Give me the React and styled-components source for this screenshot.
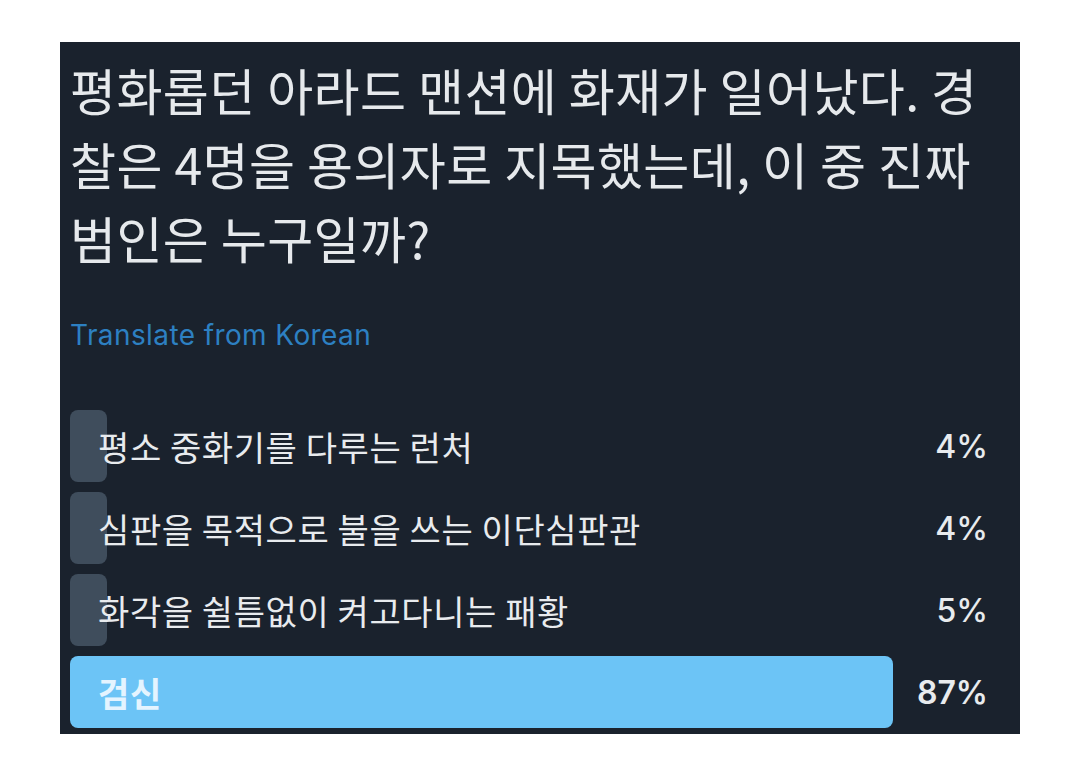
import React from "react";
import styled, { createGlobalStyle } from "styled-components";

const GlobalStyle = createGlobalStyle`
  html, body {
    margin: 0;
    padding: 0;
    background: #ffffff;
  }
  body {
    font-family: "Noto Sans CJK KR", "Noto Sans", sans-serif;
  }
`;

const Page = styled.div`
  width: 1080px;
  height: 773px;
  display: flex;
  justify-content: center;
  padding-top: 42px;
  box-sizing: border-box;
`;

const Card = styled.div`
  width: 960px;
  height: 692px;
  background: #1a222d;
  box-sizing: border-box;
  padding: 10px 32px 0 10px;
  display: flex;
  flex-direction: column;
`;

const Question = styled.h2`
  margin: 0;
  color: #e6e9ec;
  font-weight: 400;
  font-size: 50px;
  line-height: 74px;
  letter-spacing: 0.4px;
  white-space: nowrap;
`;

const Translate = styled.div`
  margin-top: 44px;
  color: #2d80c2;
  font-family: "Inter", "Noto Sans", sans-serif;
  font-size: 28px;
  letter-spacing: 0.4px;
`;

const Poll = styled.div`
  margin-top: 58px;
  display: flex;
  flex-direction: column;
  gap: 10px;
`;

const Row = styled.div`
  display: flex;
  align-items: center;
  height: 72px;
  gap: 22px;
`;

const Track = styled.div`
  position: relative;
  flex: 1;
  height: 100%;
  display: flex;
  align-items: center;
`;

const Fill = styled.div`
  position: absolute;
  left: 0;
  top: 0;
  bottom: 0;
  border-radius: 8px;
  background: ${(p) => (p.$winner ? "#6cc4f6" : "#3f4d5c")};
`;

const Label = styled.span`
  position: relative;
  padding-left: 28px;
  color: ${(p) => (p.$winner ? "#e4f4ff" : "#e8ebee")};
  font-size: 34px;
  font-weight: ${(p) => (p.$winner ? 700 : 400)};
  letter-spacing: 0.6px;
`;

const Percent = styled.span`
  width: 80px;
  text-align: right;
  color: #e8ebee;
  font-family: "Inter", "Noto Sans", sans-serif;
  font-size: 32px;
  font-weight: ${(p) => (p.$winner ? 600 : 500)};
`;

const options = [
  { label: "평소 중화기를 다루는 런처", pct: 4, width: 37 },
  { label: "심판을 목적으로 불을 쓰는 이단심판관", pct: 4, width: 37 },
  { label: "화각을 쉴틈없이 켜고다니는 패황", pct: 5, width: 37 },
  { label: "검신", pct: 87, width: 823, winner: true },
];

export default function App() {
  return (
    <>
      <GlobalStyle />
      <Page>
        <Card>
          <Question>
            평화롭던 아라드 맨션에 화재가 일어났다. 경
            <br />
            찰은 4명을 용의자로 지목했는데, 이 중 진짜
            <br />
            범인은 누구일까?
          </Question>
          <Translate>Translate from Korean</Translate>
          <Poll>
            {options.map((o) => (
              <Row key={o.label}>
                <Track>
                  <Fill $winner={o.winner} style={{ width: o.width }} />
                  <Label $winner={o.winner}>{o.label}</Label>
                </Track>
                <Percent $winner={o.winner}>{o.pct}%</Percent>
              </Row>
            ))}
          </Poll>
        </Card>
      </Page>
    </>
  );
}
